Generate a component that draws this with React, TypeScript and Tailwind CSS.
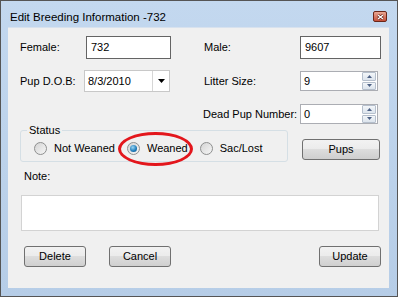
import React from "react";

function Radio({ label, checked }: { label: string; checked?: boolean }) {
  return (
    <div className="flex items-center gap-[7px]">
      <div className="w-[13px] h-[13px] rounded-full border border-[#8e8f8f] bg-[linear-gradient(135deg,#d4d4d4,#f6f6f6)] flex items-center justify-center">
        {checked && (
          <div className="w-[7px] h-[7px] rounded-full bg-[radial-gradient(circle_at_40%_35%,#9bd6f4,#1c79b8_60%,#0b4f82)]" />
        )}
      </div>
      <span>{label}</span>
    </div>
  );
}

function Btn({ label, w }: { label: string; w: string }) {
  return (
    <div
      className={`${w} h-[21px] rounded-[3px] border border-[#707070] bg-[linear-gradient(#f2f2f2_0%,#ebebeb_50%,#dddddd_50%,#cfcfcf_100%)] flex items-center justify-center`}
    >
      {label}
    </div>
  );
}

function Spinner({ value }: { value: string }) {
  return (
    <div className="w-[78px] h-[20px] border border-[#abadb3] bg-white flex items-center justify-between">
      <span className="pl-[3px]">{value}</span>
      <div className="flex flex-col w-[14px] h-[18px] mr-[1px] gap-[1px]">
        <div className="flex-1 border border-[#b5bfcc] rounded-[1px] bg-[linear-gradient(#f3f6f9,#dce4ed)] flex items-center justify-center">
          <svg width="5" height="3" viewBox="0 0 5 3">
            <path d="M0 3 L2.5 0 L5 3 Z" fill="#4d6185" />
          </svg>
        </div>
        <div className="flex-1 border border-[#b5bfcc] rounded-[1px] bg-[linear-gradient(#f3f6f9,#dce4ed)] flex items-center justify-center">
          <svg width="5" height="3" viewBox="0 0 5 3">
            <path d="M0 0 L5 0 L2.5 3 Z" fill="#4d6185" />
          </svg>
        </div>
      </div>
    </div>
  );
}

export default function App() {
  return (
    <div className="w-[398px] h-[297px] border border-[#555555] bg-[linear-gradient(#c3d8ef,#b6cde7)] flex flex-col font-['Liberation_Sans',Arial,sans-serif] text-[11px] text-black pl-[7px] pr-[8px] pb-[8px]">
      {/* title bar */}
      <div className="h-[26px] flex items-start justify-between">
        <span className="pt-[9px] pl-[2px] text-[11.5px] leading-[14px]">Edit Breeding Information -732</span>
        <div className="mt-[10px] mr-[2px] w-[14px] h-[11px] rounded-[2px] border border-[#6b2618] bg-[linear-gradient(#eaa894,#c5503a)] flex items-center justify-center">
          <svg width="7" height="6" viewBox="0 0 7 6">
            <path d="M1 1 L6 5 M6 1 L1 5" stroke="#5a1a10" strokeWidth="2.6" />
            <path d="M1 1 L6 5 M6 1 L1 5" stroke="#ffffff" strokeWidth="1.4" />
          </svg>
        </div>
      </div>

      {/* client area */}
      <div className="flex-1 bg-[#f0f0f0] border-t border-[#d8e2ee] flex flex-col pl-[12px]">
        {/* row 1 */}
        <div className="mt-[8px] h-[23px] flex items-center">
          <div className="w-[184px] flex items-center">
            <span className="w-[66px]">Female:</span>
            <div className="w-[85px] h-[23px] border border-[#646464] bg-white flex items-center pl-[4px]">732</div>
          </div>
          <span className="w-[96px]">Male:</span>
          <div className="w-[81px] h-[23px] border border-[#646464] bg-white flex items-center pl-[4px]">9607</div>
        </div>

        {/* row 2 */}
        <div className="mt-[11px] h-[22px] flex items-center">
          <div className="w-[184px] flex items-center">
            <span className="w-[64px]">Pup D.O.B:</span>
            <div className="w-[86px] h-[22px] border border-[#c8c8c8] bg-white flex items-center">
              <span className="flex-1 pl-[3px]">8/3/2010</span>
              <div className="w-[17px] h-full border-l border-[#d6d6d6] flex items-center justify-center">
                <svg width="7" height="4" viewBox="0 0 7 4">
                  <path d="M0 0 L7 0 L3.5 4 Z" fill="#000" />
                </svg>
              </div>
            </div>
          </div>
          <span className="w-[96px]">Litter Size:</span>
          <Spinner value="9" />
        </div>

        {/* row 3 */}
        <div className="mt-[12px] h-[20px] flex items-center">
          <span className="ml-[183px] w-[97px]">Dead Pup Number:</span>
          <Spinner value="0" />
        </div>

        {/* row 4 */}
        <div className="mt-[6px] flex items-start">
          <div className="relative w-[268px] h-[32px] border border-[#d5dfe5] rounded-[3px] flex items-center gap-[12px] pl-[13px] pt-[5px]">
            <span className="absolute left-[6px] -top-[7px] px-[2px] bg-[#f0f0f0] leading-[13px]">Status</span>
            <Radio label="Not Weaned" />
            <Radio label="Weaned" checked />
            <Radio label="Sac/Lost" />
            <div className="absolute left-[97px] top-[1px] w-[75px] h-[34px] rounded-[50%] border-[3px] border-[#e3161c]" />
          </div>
          <div className="ml-[14px] mt-[9px]">
            <Btn label="Pups" w="w-[78px]" />
          </div>
        </div>

        {/* note */}
        <span className="mt-[8px] ml-[4px] leading-[13px]">Note:</span>
        <div className="mt-[12px] ml-[1px] w-[358px] h-[36px] border border-[#d3d3d3] bg-white" />

        {/* buttons */}
        <div className="mt-[15px] flex items-center">
          <div className="ml-[4px]">
            <Btn label="Delete" w="w-[62px]" />
          </div>
          <div className="ml-[23px]">
            <Btn label="Cancel" w="w-[62px]" />
          </div>
          <div className="ml-[148px]">
            <Btn label="Update" w="w-[62px]" />
          </div>
        </div>
      </div>
    </div>
  );
}
